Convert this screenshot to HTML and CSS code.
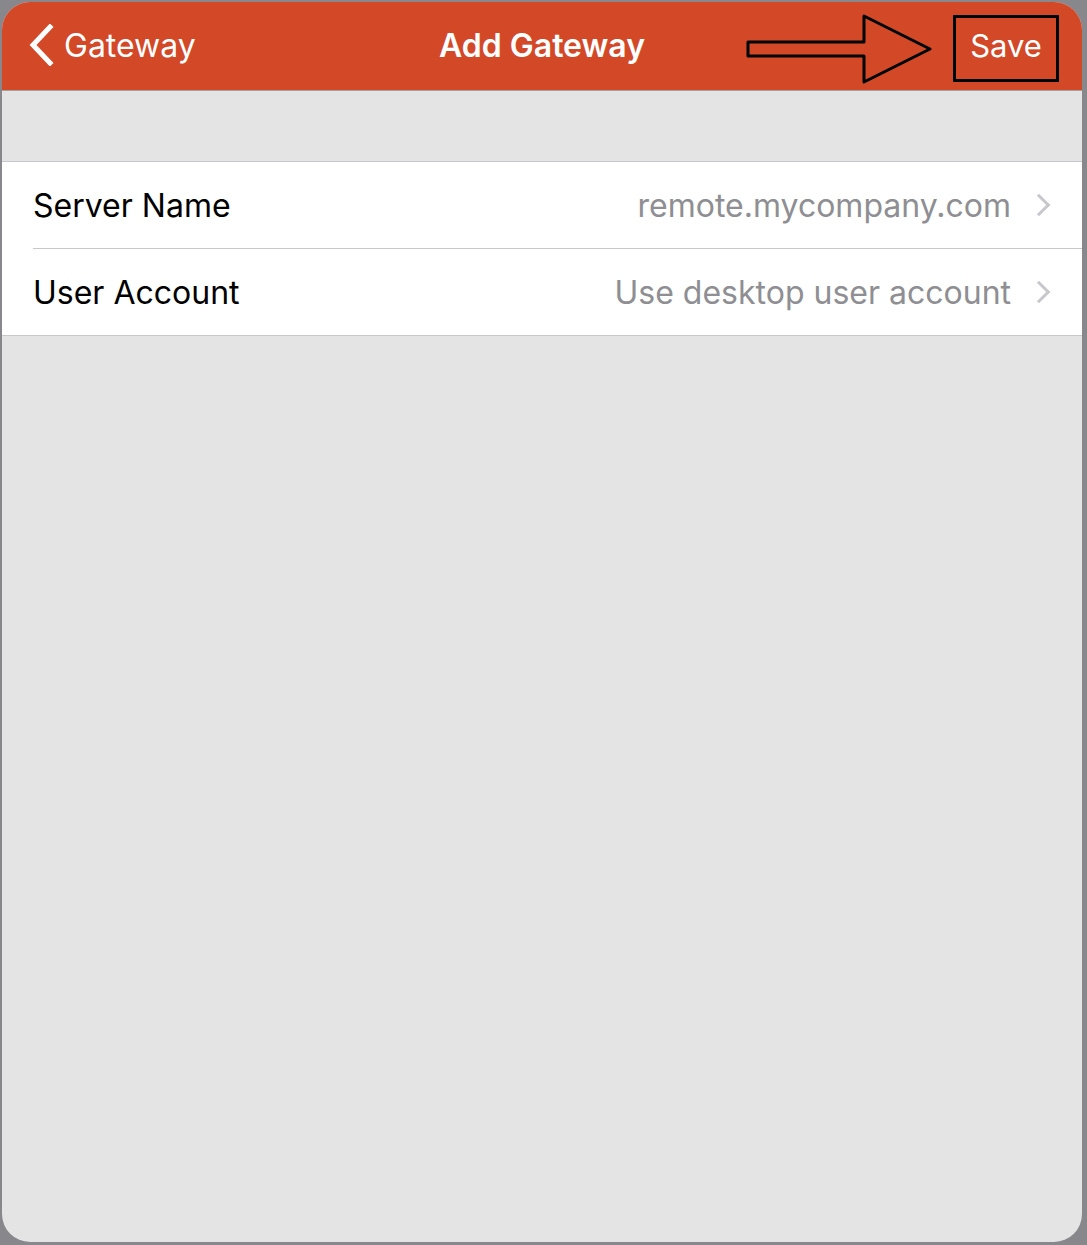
FILE: index.html
```html
<!DOCTYPE html>
<html lang="en">
<head>
  <meta charset="UTF-8" />
  <title>Add Gateway</title>
  <link rel="stylesheet" href="styles.css">
</head>
<body>
  <div class="sheet">
    <header class="navbar">
      <a class="back" href="#">
        <svg class="back-icon" width="26" height="42" viewBox="0 0 26 42">
          <path d="M22 3 L5 21 L22 39" fill="none" stroke="#fff" stroke-width="5" stroke-linecap="square"/>
        </svg>
        <span>Gateway</span>
      </a>
      <h1 class="title">Add Gateway</h1>
      <div class="actions">
        <svg class="callout" width="190" height="72" viewBox="0 0 190 72">
          <polygon points="2,28 118,28 118,2 184,35 118,68 118,42 2,42" fill="none" stroke="#000" stroke-width="3" stroke-linejoin="round"/>
        </svg>
        <button class="save">Save</button>
      </div>
    </header>

    <div class="spacer"></div>

    <ul class="table">
      <li class="row">
        <span class="label">Server Name</span>
        <span class="value">remote.mycompany.com</span>
        <span class="chev"></span>
      </li>
      <li class="row">
        <span class="label">User Account</span>
        <span class="value">Use desktop user account</span>
        <span class="chev"></span>
      </li>
    </ul>
  </div>
</body>
</html>
```

FILE: styles.css
```css
:root {
  --orange: #d34827;
  --group: #e4e4e4;
  --line: #c8c7cc;
  --muted: #8e8e93;
}

* {
  box-sizing: border-box;
  margin: 0;
  padding: 0;
}

body {
  background: #88888c;
  font-family: Inter, 'Liberation Sans', sans-serif;
  height: 1245px;
  overflow: hidden;
}

.sheet {
  margin: 2px 5px 0 2px;
  height: 1240px;
  background: var(--group);
  border-radius: 28px;
  overflow: hidden;
}

.navbar {
  height: 89px;
  background: var(--orange);
  border-bottom: 1px solid #a2a2a2;
  display: grid;
  grid-template-columns: 1fr auto 1fr;
  align-items: center;
  color: #fff;
}

.back {
  display: flex;
  align-items: center;
  gap: 10px;
  color: #fff;
  text-decoration: none;
  font-size: 32px;
  padding-left: 26px;
  margin-top: -2px;
}

.title {
  font-size: 32px;
  font-weight: 600;
  margin-top: -2px;
}

.actions {
  position: relative;
  display: flex;
  justify-content: flex-end;
  padding-right: 23px;
}

.callout {
  position: absolute;
  right: 146px;
  top: 3px;
}

.save {
  background: none;
  color: #fff;
  font-family: inherit;
  font-size: 31px;
  border: 3px solid #000;
  width: 106px;
  height: 67px;
  margin-top: 4px;
  padding-bottom: 5px;
}

.spacer {
  height: 70px;
}

.table {
  list-style: none;
  background: #fff;
  border-top: 1px solid var(--line);
  border-bottom: 1px solid var(--line);
}

.row {
  height: 86px;
  margin-left: 31px;
  display: flex;
  align-items: center;
  padding-right: 35px;
  font-size: 32px;
}

.row + .row {
  border-top: 1px solid var(--line);
  height: 87px;
}

.label {
  flex: 1;
  color: #000;
}

.value {
  color: var(--muted);
}

.chev {
  width: 16px;
  height: 16px;
  border-top: 3px solid #c7c7cc;
  border-right: 3px solid #c7c7cc;
  transform: rotate(45deg);
  margin-left: 20px;
}
```
